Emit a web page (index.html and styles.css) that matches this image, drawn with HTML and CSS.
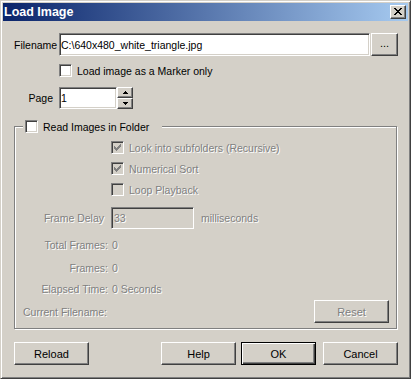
FILE: index.html
```html
<!DOCTYPE html>
<html lang="en">
<head>
	<meta charset="UTF-8">
	<meta name="viewport" content="width=device-width, initial-scale=1">
	<title>Load Image</title>
	<link rel="stylesheet" href="styles.css">
</head>
<body>

	<div class="window">
		<div class="titlebar">
			<span class="title">Load Image</span>
			<button class="btn close-btn" title="Close">
				<svg width="8" height="7" viewBox="0 0 8 7" shape-rendering="crispEdges">
					<path d="M0 0h2v1h-2zM6 0h2v1h-2zM1 1h2v1h-2zM5 1h2v1h-2zM2 2h4v1h-4zM3 3h2v1h-2zM2 4h4v1h-4zM1 5h2v1h-2zM5 5h2v1h-2zM0 6h2v1h-2zM6 6h2v1h-2z" fill="#000"/>
				</svg>
			</button>
		</div>

		<div class="client">
			<div class="row file-row">
				<label class="lbl">Filename</label>
				<input class="field file-field" type="text" value="C:\640x480_white_triangle.jpg">
				<button class="btn browse-btn">...</button>
			</div>

			<div class="row marker-row">
				<span class="check"></span>
				<span>Load image as a Marker only</span>
			</div>

			<div class="row page-row">
				<label class="lbl page-lbl">Page</label>
				<input class="field page-field" type="text" value="1">
				<div class="spin">
					<button class="btn spin-btn">
						<svg width="5" height="3" viewBox="0 0 5 3" shape-rendering="crispEdges"><path d="M2 0h1v1h-1zM1 1h3v1h-3zM0 2h5v1h-5z" fill="#000"/></svg>
					</button>
					<button class="btn spin-btn">
						<svg width="5" height="3" viewBox="0 0 5 3" shape-rendering="crispEdges"><path d="M0 0h5v1h-5zM1 1h3v1h-3zM2 2h1v1h-1z" fill="#000"/></svg>
					</button>
				</div>
			</div>

			<fieldset class="group">
				<legend class="group-head">
					<span class="check"></span>
					<span>Read Images in Folder</span>
				</legend>

				<div class="opt">
					<span class="check off checked"></span>
					<span class="dim">Look into subfolders (Recursive)</span>
				</div>
				<div class="opt">
					<span class="check off checked"></span>
					<span class="dim">Numerical Sort</span>
				</div>
				<div class="opt">
					<span class="check off"></span>
					<span class="dim">Loop Playback</span>
				</div>

				<div class="delay-row">
					<span class="delay-lbl dim">Frame Delay</span>
					<input class="field delay-field" type="text" value="33" disabled>
					<span class="dim ms">milliseconds</span>
				</div>

				<div class="info first">
					<span class="info-lbl dim">Total Frames:</span>
					<span class="dim">0</span>
				</div>
				<div class="info">
					<span class="info-lbl dim">Frames:</span>
					<span class="dim">0</span>
				</div>
				<div class="info tight">
					<span class="info-lbl dim">Elapsed Time:</span>
					<span class="dim">0 Seconds</span>
				</div>

				<div class="current-row">
					<span class="dim current-lbl">Current Filename:</span>
					<button class="btn reset-btn dim" disabled>Reset</button>
				</div>
			</fieldset>

			<div class="row buttons">
				<button class="btn push">Reload</button>
				<button class="btn push help-btn">Help</button>
				<button class="btn push default-btn">OK</button>
				<button class="btn push">Cancel</button>
			</div>
		</div>
	</div>

</body>
</html>
```

FILE: styles.css
```css
body {
	margin: 0;
	background: #d4d0c8;
	font-family: "Liberation Sans", Arial, sans-serif;
	font-size: 10.5px;
	color: #000;
}
.window {
	box-sizing: border-box;
	width: 411px;
	height: 379px;
	padding: 2px;
	border: 1px solid;
	border-color: #d4d0c8 #404040 #404040 #d4d0c8;
	box-shadow: inset 1px 1px #fff, inset -1px -1px #808080;
	background: #d4d0c8;
	display: flex;
	flex-direction: column;
}
.titlebar {
	height: 18px;
	display: flex;
	align-items: center;
	justify-content: space-between;
	padding: 0 2px 0 1px;
	background: linear-gradient(to right, #0a246a, #a6caf0);
	color: #fff;
	font-weight: bold;
	font-size: 12.5px;
}
.btn {
	box-sizing: border-box;
	margin: 0;
	padding: 0;
	font-family: inherit;
	font-size: 11px;
	color: #000;
	background: #d4d0c8;
	border: 1px solid;
	border-color: #fff #404040 #404040 #fff;
	box-shadow: inset -1px -1px #808080;
	display: flex;
	align-items: center;
	justify-content: center;
}
.close-btn {
	width: 16px;
	height: 14px;
	padding: 0 0 1px 0;
}
.client {
	flex: 1;
	padding: 12px 10px 0 11px;
}
.row {
	display: flex;
	align-items: center;
}
.field {
	box-sizing: border-box;
	margin: 0;
	padding: 0 1px;
	font-family: inherit;
	font-size: 10.5px;
	color: #000;
	background: #fff;
	border: 1px solid;
	border-color: #808080 #fff #fff #808080;
	box-shadow: inset 1px 1px #404040, inset -1px -1px #d4d0c8;
	outline: none;
}
.lbl {
	width: 45px;
	flex: none;
}
.file-row {
	height: 23px;
}
.file-field {
	flex: 1;
	height: 23px;
	margin-right: 1px;
}
.browse-btn {
	width: 27px;
	height: 23px;
	padding-bottom: 3px;
}
.check {
	box-sizing: border-box;
	width: 13px;
	height: 13px;
	flex: none;
	margin-right: 5px;
	background: #fff;
	border: 1px solid;
	border-color: #808080 #fff #fff #808080;
	box-shadow: inset 1px 1px #404040, inset -1px -1px #d4d0c8;
}
.check.off {
	background: #d4d0c8;
}
.check.checked {
	background-image: url("data:image/svg+xml,%3Csvg xmlns='http://www.w3.org/2000/svg' width='7' height='7' shape-rendering='crispEdges'%3E%3Cpath d='M6 0h1v3h-1zM5 1h1v3h-1zM4 2h1v3h-1zM3 3h1v3h-1zM2 4h1v3h-1zM1 3h1v3h-1zM0 2h1v3h-1z' fill='%23808080'/%3E%3C/svg%3E");
	background-repeat: no-repeat;
	background-position: 2px 2px;
}
.marker-row {
	margin: 8px 0 0 45px;
	height: 13px;
}
.page-row {
	margin-top: 10px;
	height: 22px;
}
.page-lbl {
	text-align: right;
	padding-right: 6px;
	box-sizing: border-box;
}
.page-field {
	width: 58px;
	height: 22px;
}
.spin {
	display: flex;
	flex-direction: column;
}
.spin-btn {
	width: 16px;
	height: 11px;
}
.group {
	margin: 11px 1px 0 0;
	padding: 0 0 5px 0;
	min-width: 0;
	border: 1px solid #808080;
	box-shadow: inset 1px 1px #fff, 1px 1px #fff;
}
.group-head {
	display: flex;
	align-items: center;
	height: 13px;
	margin-left: 8px;
	padding: 0 13px 0 2px;
	background: #d4d0c8;
}
.dim {
	color: #808080;
	text-shadow: 1px 1px 0 #fff;
}
.opt {
	display: flex;
	align-items: center;
	height: 13px;
	margin: 8px 0 0 96px;
}
.delay-row {
	display: flex;
	align-items: center;
	height: 22px;
	margin-top: 11px;
}
.delay-lbl {
	width: 89px;
	text-align: right;
}
.delay-field {
	width: 83px;
	height: 22px;
	margin: 0 7px;
	padding-left: 2px;
	background: #d4d0c8;
	color: #808080;
	text-shadow: 1px 1px 0 #fff;
}
.info {
	display: flex;
	height: 13px;
	line-height: 13px;
	margin-top: 10px;
}
.info.tight {
	margin-top: 8px;
}
.info-lbl {
	width: 93px;
	margin-right: 4px;
	text-align: right;
}
.current-row {
	display: flex;
	align-items: center;
	justify-content: space-between;
	height: 23px;
	margin-top: 4px;
	padding: 0 7px 0 8px;
}
.reset-btn {
	width: 75px;
	height: 23px;
	color: #808080;
}
.buttons {
	margin-top: 13px;
}
.push {
	width: 75px;
	height: 23px;
}
.help-btn {
	margin-left: auto;
	margin-right: 5px;
}
.default-btn {
	margin-right: 7px;
	border: 1px solid #000;
	box-shadow: inset 1px 1px #fff, inset -1px -1px #404040, inset -2px -2px #808080;
}
```
